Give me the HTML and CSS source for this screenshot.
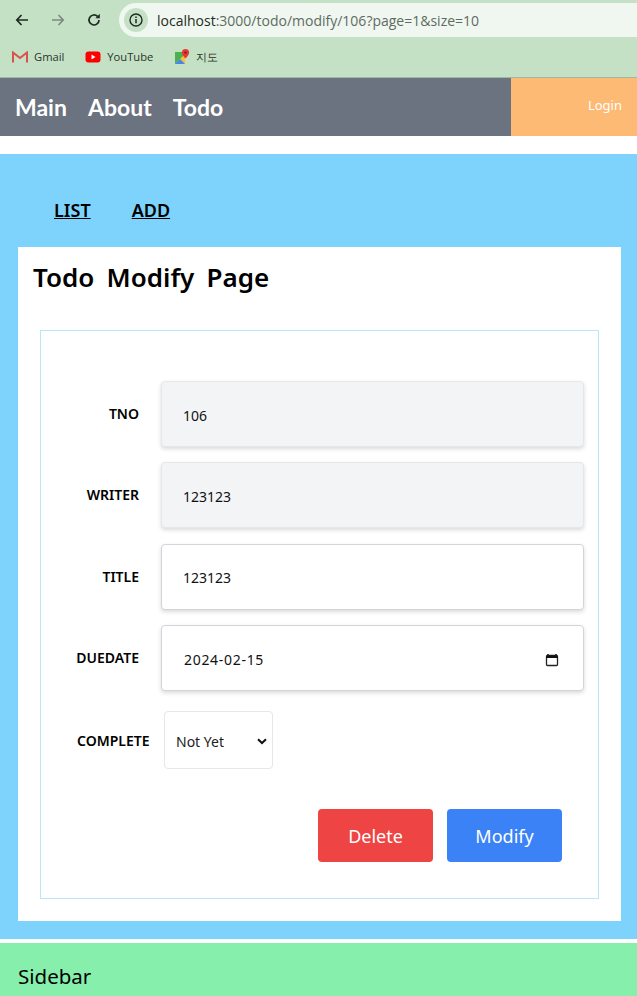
FILE: index.html
```html
<!DOCTYPE html>
<html lang="en">
<head>
  <meta charset="utf-8">
  <title>Todo Modify Page</title>
  <link rel="stylesheet" href="styles.css">
</head>
<body>
  <!-- browser toolbar -->
  <div class="browser">
    <div class="toolbar">
      <svg class="tool-icon" viewBox="0 0 16 16"><path d="M14 8H3M7.5 3 2.8 8l4.7 5" fill="none" stroke="#1f2a22" stroke-width="1.7"/></svg>
      <svg class="tool-icon" viewBox="0 0 16 16"><path d="M2 8h11M8.500 3l4.700 5-4.700 5" fill="none" stroke="#7d8a80" stroke-width="1.700"/></svg>
      <svg class="tool-icon" viewBox="0 0 16 16"><path d="M13 8a5 5 0 1 1-1.500-3.600" fill="none" stroke="#1f2a22" stroke-width="1.700"/><path d="M13.800 1.800v4.400H9.400z" fill="#1f2a22"/></svg>
      <div class="address">
        <span class="info">
          <svg viewBox="0 0 16 16" width="16" height="16"><circle cx="8" cy="8" r="6" fill="none" stroke="#1f2a22" stroke-width="1.400"/><path d="M8 7v4.200M8 4.600v1.300" stroke="#1f2a22" stroke-width="1.500"/></svg>
        </span>
        <span class="url"><span class="host">localhost</span>:3000/todo/modify/106?page=1&amp;size=10</span>
      </div>
    </div>
    <div class="bookmarks">
      <span class="bookmark">
        <svg viewBox="0 0 16 12" width="16" height="12"><path d="M1 11.500V1.500l7 5.500 7-5.500v10" fill="none" stroke="#d9534a" stroke-width="2"/></svg>
        Gmail
      </span>
      <span class="bookmark">
        <svg viewBox="0 0 16 12" width="16" height="12"><rect width="15" height="11" x=".5" y=".5" rx="3" fill="#f00"/><path d="M6.500 3.500v5l4-2.500z" fill="#fff"/></svg>
        YouTube
      </span>
      <span class="bookmark">
        <svg viewBox="0 0 16 16" width="16" height="16"><path d="M1 3h10v12H1z" fill="#4caf50"/><path d="M1 15 11 5v10z" fill="#fbc02d"/><path d="M1 15l5-5 5 5z" fill="#4285f4"/><path d="M11.500 0a3.600 3.600 0 0 1 3.600 3.600c0 2.400-3.600 6-3.600 6s-3.600-3.600-3.600-6A3.600 3.600 0 0 1 11.500 0z" fill="#e53935"/><circle cx="11.500" cy="3.600" r="1.200" fill="#8e1c17"/></svg>
        지도
      </span>
    </div>
  </div>

  <nav class="topnav">
    <div class="nav-links">
      <a>Main</a>
      <a>About</a>
      <a>Todo</a>
    </div>
    <div class="nav-login">Login</div>
  </nav>

  <main class="content">
    <div class="subnav">
      <a>LIST</a>
      <a>ADD</a>
    </div>
    <div class="page-card">
      <h1>Todo Modify Page</h1>
      <div class="form-box">
        <div class="form-row">
          <label>TNO</label>
          <div class="field readonly">106</div>
        </div>
        <div class="form-row">
          <label>WRITER</label>
          <div class="field readonly">123123</div>
        </div>
        <div class="form-row">
          <label>TITLE</label>
          <div class="field">123123</div>
        </div>
        <div class="form-row">
          <label>DUEDATE</label>
          <div class="field date">
            <span>2024-02-15</span>
            <svg viewBox="0 0 14 14" width="14" height="14"><path d="M3 1v2M11 1v2" stroke="#111" stroke-width="1.500"/><rect x="1.500" y="2.500" width="11" height="10" rx="1" fill="none" stroke="#222" stroke-width="1.300"/><rect x="1.500" y="2.500" width="11" height="2.500" fill="#111"/></svg>
          </div>
        </div>
        <div class="select-row">
          <label>COMPLETE</label>
          <div class="select-box">
            <span>Not Yet</span>
            <svg viewBox="0 0 10 7" width="10" height="7"><path d="M1 1.200 5 5l4-3.800" fill="none" stroke="#111" stroke-width="2"/></svg>
          </div>
        </div>
        <div class="buttons">
          <button class="btn-delete">Delete</button>
          <button class="btn-modify">Modify</button>
        </div>
      </div>
    </div>
  </main>

  <div class="sidebar">Sidebar</div>
</body>
</html>
```

FILE: styles.css
```css
* {
  box-sizing: border-box;
  margin: 0;
  padding: 0;
}
html, body {
  height: 996px;
  overflow: hidden;
}
body {
  font-family: "Noto Sans", "Noto Sans CJK KR", sans-serif;
  background: #fff;
  color: #000;
}

/* browser toolbar */
.browser {
  height: 78px;
  background: #c5e1c5;
  border-bottom: 1px solid #9fb8a3;
}
.toolbar {
  height: 40px;
  padding-left: 14px;
  display: flex;
  align-items: center;
}
.tool-icon {
  width: 16px;
  height: 16px;
  margin-right: 20px;
  flex: none;
}
.address {
  flex: 1;
  height: 34px;
  margin-left: -3px;
  background: #eff7f0;
  border-radius: 17px 0 0 17px;
  display: flex;
  align-items: center;
  padding-left: 5px;
  font-family: "Open Sans", sans-serif;
  font-size: 14px;
  color: #5f6b62;
}
.info {
  width: 24px;
  height: 24px;
  border-radius: 50%;
  background: #c5e1c5;
  display: flex;
  align-items: center;
  justify-content: center;
  margin-right: 9px;
}
.host {
  color: #1f2a22;
}
.bookmarks {
  height: 37px;
  padding: 0 0 4px 12px;
  display: flex;
  align-items: center;
  gap: 21px;
  font-family: "Open Sans", sans-serif;
  font-size: 11.2px;
  color: #2a332c;
}
.bookmark {
  display: flex;
  align-items: center;
  gap: 6px;
}

/* top nav */
.topnav {
  height: 58px;
  display: flex;
  background: #6b7280;
}
.nav-links {
  flex: 1;
  display: flex;
  align-items: center;
  gap: 21px;
  padding-left: 15px;
  font-family: Lato, sans-serif;
  font-size: 23px;
  font-weight: 700;
  color: #fff;
}
.nav-login {
  width: 126px;
  background: #fdba74;
  color: #fff;
  font-size: 13px;
  display: flex;
  align-items: center;
  justify-content: flex-end;
  padding: 0 15px 4px 0;
}

/* main column */
.content {
  margin-top: 18px;
  height: 785px;
  background: #7dd3fc;
  padding: 0 16px 0 18px;
}
.subnav {
  height: 93px;
  display: flex;
  gap: 41px;
  padding: 43px 0 0 36px;
  font-size: 18px;
  font-weight: 600;
  line-height: 26px;
}
.subnav a {
  text-decoration: underline;
}
.page-card {
  height: 674px;
  background: #fff;
  padding: 0 22px;
}
h1 {
  font-size: 26px;
  font-weight: 600;
  line-height: 34px;
  height: 83px;
  padding-top: 13px;
  margin-left: -7px;
  word-spacing: 5.5px;
}
.form-box {
  height: 569px;
  border: 1px solid #bae6fd;
  padding: 50px 14px 0;
}
.form-row {
  display: flex;
  margin-bottom: 15.33px;
}
.form-row label {
  width: 84px;
  margin-right: 22px;
  text-align: right;
  font-size: 14px;
  font-weight: 600;
  line-height: 18px;
  padding-top: 24px;
  flex: none;
  white-space: nowrap;
}
.field {
  flex: 1;
  height: 66px;
  border: 1px solid #d1d5db;
  border-radius: 4px;
  background: #fff;
  box-shadow: 0 2px 4px rgba(0, 0, 0, 0.15);
  padding: 2px 0 0 21px;
  display: flex;
  align-items: center;
  font-size: 14px;
  color: #111;
}
.field.readonly {
  background: #f3f4f6;
  border-color: #e5e7eb;
}
.field.date {
  justify-content: space-between;
  padding: 4px 24px 0 22px;
  letter-spacing: 0.7px;
}
.select-row {
  display: flex;
  align-items: center;
  margin-top: 20px;
}
.select-row label {
  width: 87px;
  margin-left: 22px;
  padding-top: 2px;
  font-size: 14px;
  font-weight: 600;
  white-space: nowrap;
}
.select-box {
  width: 109px;
  height: 58px;
  border: 1px solid #e5e7eb;
  border-radius: 4px;
  display: flex;
  align-items: center;
  justify-content: space-between;
  padding: 4px 5px 0 11px;
  font-size: 14px;
  color: #222;
}
.buttons {
  display: flex;
  justify-content: flex-end;
  gap: 14px;
  margin-top: 40px;
  padding-right: 22px;
}
.buttons button {
  width: 115px;
  height: 53px;
  border: none;
  border-radius: 4px;
  padding-top: 2px;
  color: #fff;
  font-family: inherit;
  font-size: 18px;
}
.btn-delete {
  background: #ef4444;
}
.btn-modify {
  background: #3b82f6;
}

/* sidebar */
.sidebar {
  margin-top: 4px;
  height: 53px;
  background: #86efac;
  padding: 19px 0 0 18px;
  font-size: 20.5px;
  line-height: 28px;
}
```
